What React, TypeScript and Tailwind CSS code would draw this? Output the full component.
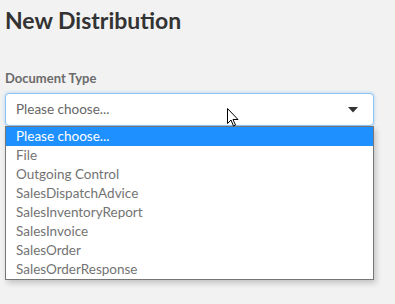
const options = [
  "Please choose...",
  "File",
  "Outgoing Control",
  "SalesDispatchAdvice",
  "SalesInventoryReport",
  "SalesInvoice",
  "SalesOrder",
  "SalesOrderResponse",
];

const App = () => {
  return (
    <div className="relative h-[304px] w-[395px] overflow-hidden bg-[#f2f2f2] font-['Lato',sans-serif]">
      <div className="px-[5px] pt-[6px]">
        <h1 className="text-[23px] font-bold leading-[28px] text-[#333333]">New Distribution</h1>
        <p className="mt-[36px] text-[13px] font-bold leading-[16px] text-[#6b6b6b]">Document Type</p>
        <div className="mt-[7px] w-[369px]">
          <div className="flex h-[33px] items-center justify-between rounded-[4px] border border-[#8cc4f5] bg-white pl-[10px] pr-[15px] shadow-[0_0_3px_1px_rgba(120,180,240,0.35)]">
            <span className="text-[13.5px] text-[#666666]">Please choose...</span>
            <svg width="10" height="6" viewBox="0 0 10 6">
              <path d="M0 0h10L5 5.5z" fill="#333333" />
            </svg>
          </div>
          <ul className="border border-[#767676] bg-white shadow-[2px_3px_6px_rgba(0,0,0,0.2)]">
            {options.map((o, i) => (
              <li
                key={o}
                className={`h-[19px] pl-[10px] text-[13.5px] leading-[19px] ${
                  i === 0 ? "bg-[#1e90ff] text-white" : "text-[#737373]"
                }`}
              >
                {o}
              </li>
            ))}
          </ul>
        </div>
      </div>
      <svg className="absolute left-[227px] top-[108px]" width="13" height="20" viewBox="0 0 13 20">
        <path d="M0.5 0.5v15l3.5-3.5 2.5 6 2-1-2.5-5.5h5z" fill="white" stroke="black" strokeWidth="1" strokeLinejoin="round" />
      </svg>
    </div>
  );
};

export default App;
